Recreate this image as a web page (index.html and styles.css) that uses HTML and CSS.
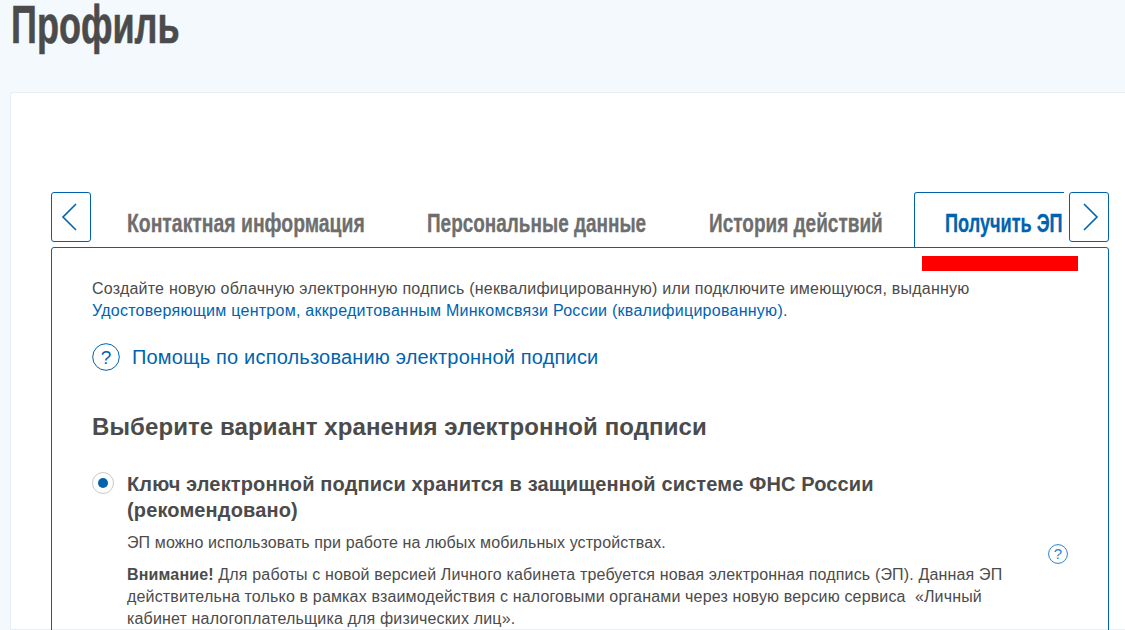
FILE: index.html
```html
<!DOCTYPE html>
<html lang="ru">
<head>
<meta charset="utf-8">
<title>Профиль</title>
<link rel="stylesheet" href="styles.css">
</head>
<body>
<h1 class="title"><span class="narrow">Профиль</span></h1>
<main class="card">
  <div class="tabbar">
    <button class="arrow arrow-prev" aria-label="Назад">
      <svg width="16" height="28" viewBox="0 0 16 28"><path d="M15 1 L2 14 L15 27" fill="none" stroke="#0063b0" stroke-width="1.6"/></svg>
    </button>
    <div class="tabs">
      <a class="tab tab-contact"><span class="narrow">Контактная информация</span></a>
      <a class="tab tab-personal"><span class="narrow">Персональные данные</span></a>
      <a class="tab tab-history"><span class="narrow">История действий</span></a>
      <a class="tab tab-active"><span class="narrow">Получить ЭП</span></a>
    </div>
    <button class="arrow arrow-next" aria-label="Вперёд">
      <svg width="16" height="28" viewBox="0 0 16 28"><path d="M1 1 L14 14 L1 27" fill="none" stroke="#0063b0" stroke-width="1.6"/></svg>
    </button>
  </div>
  <section class="panel">
    <div class="redact"></div>
    <p class="intro">Создайте новую облачную электронную подпись (неквалифицированную) или подключите имеющуюся, выданную<br><a class="link">Удостоверяющим центром, аккредитованным Минкомсвязи России (квалифицированную).</a></p>
    <div class="help">
      <svg class="q q-big" viewBox="0 0 28 28"><circle cx="14" cy="14" r="13.3" fill="none" stroke="#0063b0" stroke-width="1"/><text x="14" y="20.5" text-anchor="middle" class="q-text">?</text></svg>
      <a class="help-link">Помощь по использованию электронной подписи</a>
    </div>
    <h2 class="heading">Выберите вариант хранения электронной подписи</h2>
    <div class="option">
      <span class="radio"><span class="dot"></span></span>
      <div class="option-body">
        <h3 class="option-title">Ключ электронной подписи хранится в защищенной системе ФНС России (рекомендовано)</h3>
        <p class="note">ЭП можно использовать при работе на любых мобильных устройствах.</p>
        <p class="note note-wide"><b>Внимание!</b> Для работы с новой версией Личного кабинета требуется новая электронная подпись (ЭП). Данная ЭП действительна только в рамках взаимодействия с налоговыми органами через новую версию сервиса &nbsp;«Личный кабинет налогоплательщика для физических лиц».</p>
      </div>
      <svg class="q q-small" viewBox="0 0 20 20"><circle cx="10" cy="10" r="9.4" fill="none" stroke="#2a7fd0" stroke-width="1"/><text x="10" y="15" text-anchor="middle" class="q-text-small">?</text></svg>
    </div>
  </section>
</main>
</body>
</html>
```
FILE: styles.css
```css
html, body {
  margin: 0;
  height: 630px;
  overflow: hidden;
}
body {
  background: #f4f9fd;
  color: #4b4b4b;
  font-family: "Liberation Sans", Arial, sans-serif;
}
.narrow {
  display: inline-block;
  transform-origin: left center;
  white-space: nowrap;
}
.title {
  margin: 0;
  height: 92px;
  padding-left: 11px;
  box-sizing: border-box;
  font-size: 53px;
  line-height: 50px;
  font-weight: 700;
  color: #4b4b4b;
  -webkit-text-stroke: 0.6px #4b4b4b;
}
.title .narrow {
  transform: scaleX(0.68);
}
.card {
  margin-left: 10px;
  height: 538px;
  box-sizing: border-box;
  background: #fff;
  border: 1px solid #e9eef2;
  border-right: 0;
  border-radius: 3px 0 0 0;
  padding: 99px 16px 0 40px;
}
.tabbar {
  display: flex;
  align-items: flex-start;
  height: 55px;
}
.arrow {
  flex: none;
  width: 40px;
  height: 50px;
  display: flex;
  align-items: center;
  justify-content: center;
  background: #fff;
  border: 1px solid #0063b0;
  border-radius: 3px;
  box-sizing: border-box;
}
.arrow-prev { padding: 0 4px 0 0; }
.arrow-next { padding: 0 0 0 3px; }
.tabs {
  flex: 1;
  min-width: 0;
  display: flex;
  overflow: hidden;
  height: 55px;
  margin-right: 5px;
  padding-left: 36px;
}
.tab {
  flex: none;
  box-sizing: border-box;
  height: 55px;
  padding-top: 16px;
  margin-right: 63px;
  font-size: 25px;
  line-height: 30px;
  font-weight: 700;
  color: #6e6e6e;
  white-space: nowrap;
  -webkit-text-stroke: 0.3px currentColor;
}
.tab-contact { width: 237px; }
.tab-contact .narrow { transform: scaleX(0.775); }
.tab-personal { width: 219px; }
.tab-personal .narrow { transform: scaleX(0.758); }
.tab-history { width: 174px; }
.tab-history .narrow { transform: scaleX(0.76); }
.tab-active {
  color: #0063b0;
  width: 220px;
  background: #fff;
  border: 1px solid #0063b0;
  border-bottom: 0;
  border-radius: 3px 0 0 0;
  margin-left: -32px;
  margin-right: 0;
  padding-left: 30px;
  padding-top: 15px;
}
.tab-active .narrow { transform: scaleX(0.725); }
.panel {
  position: relative;
  height: 400px;
  box-sizing: border-box;
  border: 1px solid #0063b0;
  border-radius: 3px;
  padding: 30px 40px 0 40px;
}
.redact {
  position: absolute;
  left: 870px;
  top: 8px;
  width: 156px;
  height: 15px;
  background: #ff0000;
}
.intro {
  margin: 0;
  font-size: 16px;
  line-height: 22px;
  letter-spacing: 0.22px;
}
.link, .help-link {
  color: #0063b0;
}
.link { letter-spacing: 0.26px; }
.help {
  display: flex;
  align-items: center;
  gap: 12px;
  margin-top: 21px;
}
.q { display: block; flex: none; }
.q-big { width: 28px; height: 28px; }
.q-text { font: 19px "Liberation Sans", sans-serif; fill: #0063b0; }
.q-text-small { font: 15px "Liberation Sans", sans-serif; fill: #2a7fd0; }
.help-link {
  font-size: 20px;
  line-height: 28px;
  letter-spacing: 0.18px;
}
.heading {
  margin: 41px 0 0;
  font-size: 24px;
  line-height: 30px;
  font-weight: 700;
  letter-spacing: 0.1px;
}
.option {
  display: flex;
  align-items: flex-start;
  margin-top: 29px;
}
.radio {
  flex: none;
  width: 22px;
  height: 22px;
  margin-top: 1px;
  margin-right: 13px;
  box-sizing: border-box;
  border: 1px solid #c9c9c9;
  border-radius: 50%;
  display: flex;
  align-items: center;
  justify-content: center;
}
.dot {
  width: 10px;
  height: 10px;
  border-radius: 50%;
  background: #0063b0;
}
.option-body {
  width: 880px;
  flex: none;
}
.option-title {
  margin: 0;
  font-size: 20px;
  line-height: 26px;
  font-weight: 700;
  letter-spacing: 0.14px;
}
.note {
  margin: 9px 0 0;
  font-size: 16px;
  line-height: 22px;
  letter-spacing: 0.11px;
}
.note-wide {
  margin-top: 10px;
  letter-spacing: 0.16px;
}
.q-small {
  width: 20px;
  height: 20px;
  margin-top: 73px;
  margin-left: 41px;
}
```
